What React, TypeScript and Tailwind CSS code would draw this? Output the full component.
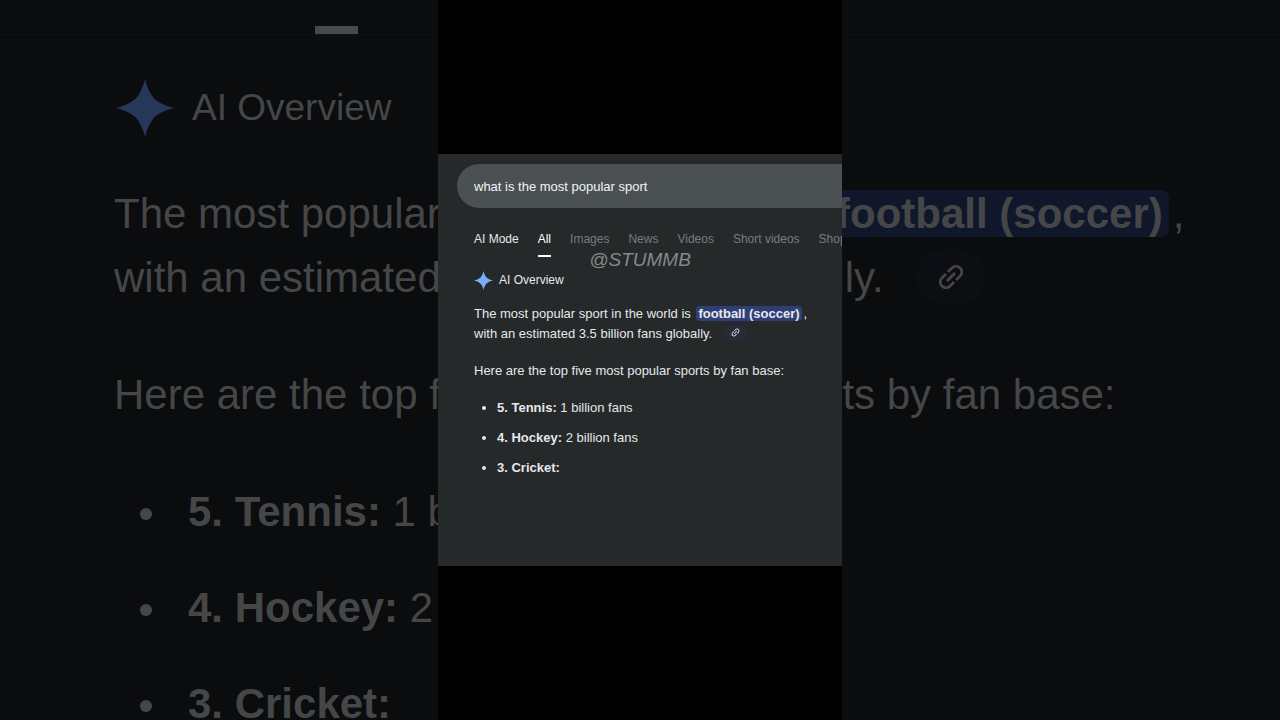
const tabs = ["AI Mode", "All", "Images", "News", "Videos", "Short videos", "Shopping"];

const facts = [
  { label: "5. Tennis:", value: "1 billion fans" },
  { label: "4. Hockey:", value: "2 billion fans" },
  { label: "3. Cricket:", value: "" },
];

function tabStyle(tab: string) {
  if (tab === "All") return "border-b-2 border-white pb-1.5 text-white";
  if (tab === "AI Mode") return "pb-2 text-[#e6e8ea]";
  return "pb-2 text-[#777b7e]";
}

function Spark({ className }: { className: string }) {
  return (
    <svg viewBox="0 0 24 24" fill="currentColor" aria-hidden="true" className={className}>
      <path d="M12 0C12.6 3 13.9 5.7 15.8 8.2C18.3 10.1 21 11.4 24 12C21 12.6 18.3 13.9 15.8 15.8C13.9 18.3 12.6 21 12 24C11.4 21 10.1 18.3 8.2 15.8C5.7 13.9 3 12.6 0 12C3 11.4 5.7 10.1 8.2 8.2C10.1 5.7 11.4 3 12 0Z" />
    </svg>
  );
}

function ChainLink({ className }: { className: string }) {
  return (
    <svg viewBox="0 0 24 24" fill="currentColor" aria-hidden="true" className={className}>
      <path
        transform="rotate(-45 12 12)"
        d="M3.9 12c0-1.71 1.39-3.1 3.1-3.1h4V7H7c-2.76 0-5 2.24-5 5s2.24 5 5 5h4v-1.9H7c-1.71 0-3.1-1.39-3.1-3.1zM8 13h8v-2H8v2zm9-6h-4v1.9h4c1.71 0 3.1 1.39 3.1 3.1s-1.39 3.1-3.1 3.1h-4V17h4c2.76 0 5-2.24 5-5s-2.24-5-5-5z"
      />
    </svg>
  );
}

function Backdrop() {
  return (
    <div
      aria-hidden="true"
      className="col-start-1 row-start-1 h-screen overflow-hidden bg-[#0b0c0d] text-[42px] leading-16 whitespace-nowrap text-[#454648]"
    >
      <div className="h-[35px] border-b border-[#101112] pt-[26px] pl-[315px]">
        <div className="h-2 w-[43px] bg-[#48494a]" />
      </div>
      <div className="pl-[114px]">
        <div className="flex items-center gap-[18px] pt-[41px] pl-0.5 text-[37px]">
          <Spark className="size-[58px] text-[#26375a]" />
          <span>AI Overview</span>
        </div>
        <p className="pt-[42px]">
          The most popular sport in the world is{" "}
          <strong className="mx-1 rounded-lg bg-[#11172b] px-1.5">football (soccer)</strong>,
          <br />
          with an estimated 3.5 billion fans globally.
          <span className="-mt-1 mb-1 ml-8 inline-flex h-[54px] w-[70px] items-center justify-center rounded-full bg-[#0d0e13] align-middle">
            <ChainLink className="size-[34px]" />
          </span>
        </p>
        <p className="pt-[53px]">Here are the top five most popular sports by fan base:</p>
        <ul className="flex flex-col gap-8 pt-[53px]">
          {facts.map((fact) => (
            <li key={fact.label} className="flex items-center pl-[26px]">
              <span className="mt-1 mr-9 size-3 rounded-full bg-current" />
              <span>
                <strong>{fact.label}</strong> {fact.value}
              </span>
            </li>
          ))}
        </ul>
      </div>
    </div>
  );
}

function Results() {
  return (
    <main className="relative col-start-1 row-start-1 flex h-screen w-full max-w-101 flex-col justify-center justify-self-center overflow-hidden bg-black">
      <div className="overflow-hidden bg-[#25292a] pt-[10px] pb-22 text-[13px] leading-5 text-[#e6e8ea]">
        <form role="search" className="pl-[19px]">
          <input
            type="text"
            aria-label="Search"
            defaultValue="what is the most popular sport"
            className="h-11 w-full rounded-l-full bg-[#4b5053] pl-[17px] text-[#f1f3f4] outline-none"
          />
        </form>
        <div className="relative">
          <nav className="flex gap-[19px] border-b border-[#2a2d2f] pt-[21px] pl-9 text-[12px] leading-5 whitespace-nowrap">
            {tabs.map((tab) => (
              <a key={tab} href="#results" className={tabStyle(tab)}>
                {tab}
              </a>
            ))}
          </nav>
          <span className="absolute inset-x-0 -bottom-3.5 text-center text-[19px] leading-6 text-[#858889] italic">
            @STUMMB
          </span>
        </div>
        <section id="results" className="pl-9 whitespace-nowrap">
          <h1 className="flex items-center gap-1.5 pt-3 text-[12px] leading-5">
            <Spark className="size-[19px] text-[#7cacf8]" />
            AI Overview
          </h1>
          <p className="pt-[14px]">
            The most popular sport in the world is{" "}
            <strong className="mx-0.5 rounded-sm bg-[#303e77] px-0.5">football (soccer)</strong>,
            <br />
            with an estimated 3.5 billion fans globally.
            <button
              type="button"
              aria-label="Show sources"
              className="-mt-0.5 mb-0.5 ml-3 inline-flex h-4 w-[23px] items-center justify-center rounded-full bg-[#292c38] align-middle"
            >
              <ChainLink className="size-[11px]" />
            </button>
          </p>
          <p className="pt-[17px]">Here are the top five most popular sports by fan base:</p>
          <ul className="flex flex-col gap-2.5 pt-[17px]">
            {facts.map((fact) => (
              <li key={fact.label} className="flex items-center pl-2">
                <span className="mr-[11px] size-1 rounded-full bg-current" />
                <span>
                  <strong>{fact.label}</strong> {fact.value}
                </span>
              </li>
            ))}
          </ul>
        </section>
      </div>
    </main>
  );
}

export default function App() {
  return (
    <div className="grid grid-cols-1 overflow-hidden bg-black font-['Liberation_Sans',Arial,sans-serif]">
      <Backdrop />
      <Results />
    </div>
  );
}
